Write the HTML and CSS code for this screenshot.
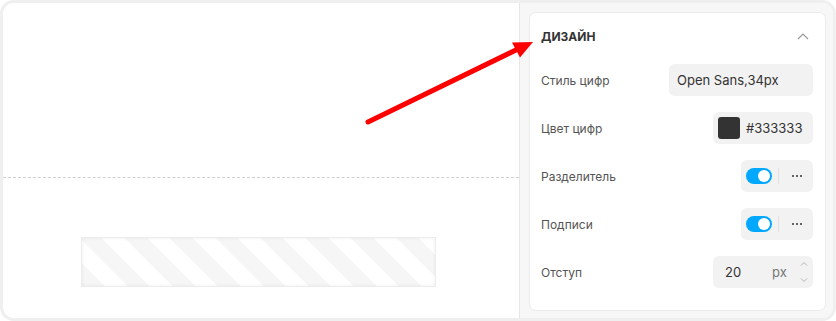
FILE: index.html
```html
<!DOCTYPE html>
<html lang="ru">
<head>
  <meta charset="UTF-8">
  <title>Дизайн</title>
  <link rel="stylesheet" href="styles.css">
</head>
<body>
<div class="frame">
  <div class="canvas">
    <div class="canvas-top"></div>
    <div class="canvas-bottom">
      <div class="stripes"></div>
    </div>
  </div>

  <div class="panel">
    <div class="card">
      <div class="card-head">
        <span class="card-title">Дизайн</span>
        <svg class="chevron" width="12" height="7" viewBox="0 0 12 7">
          <path d="M1 6 L6 1 L11 6" fill="none" stroke="#9a9a9a" stroke-width="1.2"/>
        </svg>
      </div>

      <div class="row">
        <span class="label">Стиль цифр</span>
        <div class="box box-font">Open Sans,34px</div>
      </div>

      <div class="row">
        <span class="label">Цвет цифр</span>
        <div class="box box-color">
          <span class="swatch"></span>
          <span>#333333</span>
        </div>
      </div>

      <div class="row">
        <span class="label">Разделитель</span>
        <div class="box box-toggle">
          <span class="toggle"><span class="knob"></span></span>
          <span class="sep"></span>
          <span class="dots"><i></i><i></i><i></i></span>
        </div>
      </div>

      <div class="row">
        <span class="label">Подписи</span>
        <div class="box box-toggle">
          <span class="toggle"><span class="knob"></span></span>
          <span class="sep"></span>
          <span class="dots"><i></i><i></i><i></i></span>
        </div>
      </div>

      <div class="row">
        <span class="label">Отступ</span>
        <div class="box box-number">
          <span class="num">20</span>
          <span class="unit">px</span>
          <svg class="spin" width="8" height="22" viewBox="0 0 8 22">
            <path d="M1 4.5 L4 1.5 L7 4.5" fill="none" stroke="#b5b5b5" stroke-width="1"/>
            <path d="M1 17.5 L4 20.5 L7 17.5" fill="none" stroke="#b5b5b5" stroke-width="1"/>
          </svg>
        </div>
      </div>
    </div>
  </div>

  <!-- стрелка-указатель поверх макета -->
  <svg class="arrow" width="836" height="321" viewBox="0 0 836 321">
    <line x1="368" y1="122" x2="518" y2="49" stroke="#ff0000" stroke-width="5" stroke-linecap="round"/>
    <polygon points="533,42 512,42.5 520,57.5" fill="#ff0000"/>
  </svg>
</div>
</body>
</html>
```

FILE: styles.css
```css
body {
  margin: 0;
  font-family: Inter, "Noto Sans", sans-serif;
  color: #333;
  background: #fff;
}
.frame {
  position: relative;
  width: 836px;
  height: 321px;
  box-sizing: border-box;
  border: 3px solid #efefef;
  border-radius: 14px;
  display: flex;
  overflow: hidden;
  background: #fff;
}

/* левая часть — превью */
.canvas {
  flex: 1;
  display: flex;
  flex-direction: column;
}
.canvas-top {
  height: 174px;
  border-bottom: 1px dashed #cfcfcf;
}
.canvas-bottom {
  padding: 59px 0 0 78px;
}
.stripes {
  width: 355px;
  height: 50px;
  box-sizing: border-box;
  border: 1px solid #ececec;
  box-shadow: inset 0 0 4px rgba(0, 0, 0, 0.06);
  background: repeating-linear-gradient(45deg, #f6f6f6 0 16px, #fff 16px 32px);
}

/* правая панель */
.panel {
  width: 314px;
  box-sizing: border-box;
  border-left: 1px solid #e6e6e6;
  background: #f7f7f7;
  padding: 9px 7px 7px 9px;
  display: flex;
}
.card {
  flex: 1;
  background: #fff;
  border: 1px solid #ebebeb;
  border-radius: 7px;
  padding: 15px 12px 0 11px;
  display: flex;
  flex-direction: column;
  gap: 16px;
}
.card-head {
  display: flex;
  align-items: center;
  justify-content: space-between;
  height: 16px;
  margin-bottom: 4px;
}
.card-title {
  font-size: 12px;
  font-weight: 700;
  text-transform: uppercase;
  color: #333;
}
.chevron {
  margin-right: 4px;
}
.row {
  display: flex;
  align-items: center;
  justify-content: space-between;
  height: 32px;
}
.label {
  font-size: 12px;
  color: #555;
}
.box {
  height: 32px;
  box-sizing: border-box;
  background: #f2f2f2;
  border-radius: 6px;
  display: flex;
  align-items: center;
  font-size: 13px;
  color: #333;
}
.box-font {
  width: 144px;
  padding-left: 8px;
}
.box-color {
  width: 100px;
  padding-left: 5px;
  gap: 6px;
}
.swatch {
  width: 22px;
  height: 22px;
  border-radius: 3px;
  background: #333;
}
.box-toggle {
  width: 72px;
  padding-left: 5px;
}
.toggle {
  width: 26px;
  height: 16px;
  border-radius: 8px;
  background: #00a8ff;
  position: relative;
}
.knob {
  position: absolute;
  right: 2px;
  top: 2px;
  width: 12px;
  height: 12px;
  border-radius: 50%;
  background: #fff;
}
.sep {
  width: 1px;
  height: 16px;
  background: #e0e0e0;
  margin-left: 6px;
}
.dots {
  display: flex;
  gap: 2px;
  margin-left: 13px;
}
.dots i {
  width: 2px;
  height: 2px;
  background: #333;
  border-radius: 50%;
}
.box-number {
  width: 100px;
  padding-left: 12px;
}
.num {
  width: 47px;
}
.unit {
  color: #777;
  width: 28px;
}
.spin {
  display: block;
}

.arrow {
  position: absolute;
  left: -3px;
  top: -3px;
  pointer-events: none;
}
```
